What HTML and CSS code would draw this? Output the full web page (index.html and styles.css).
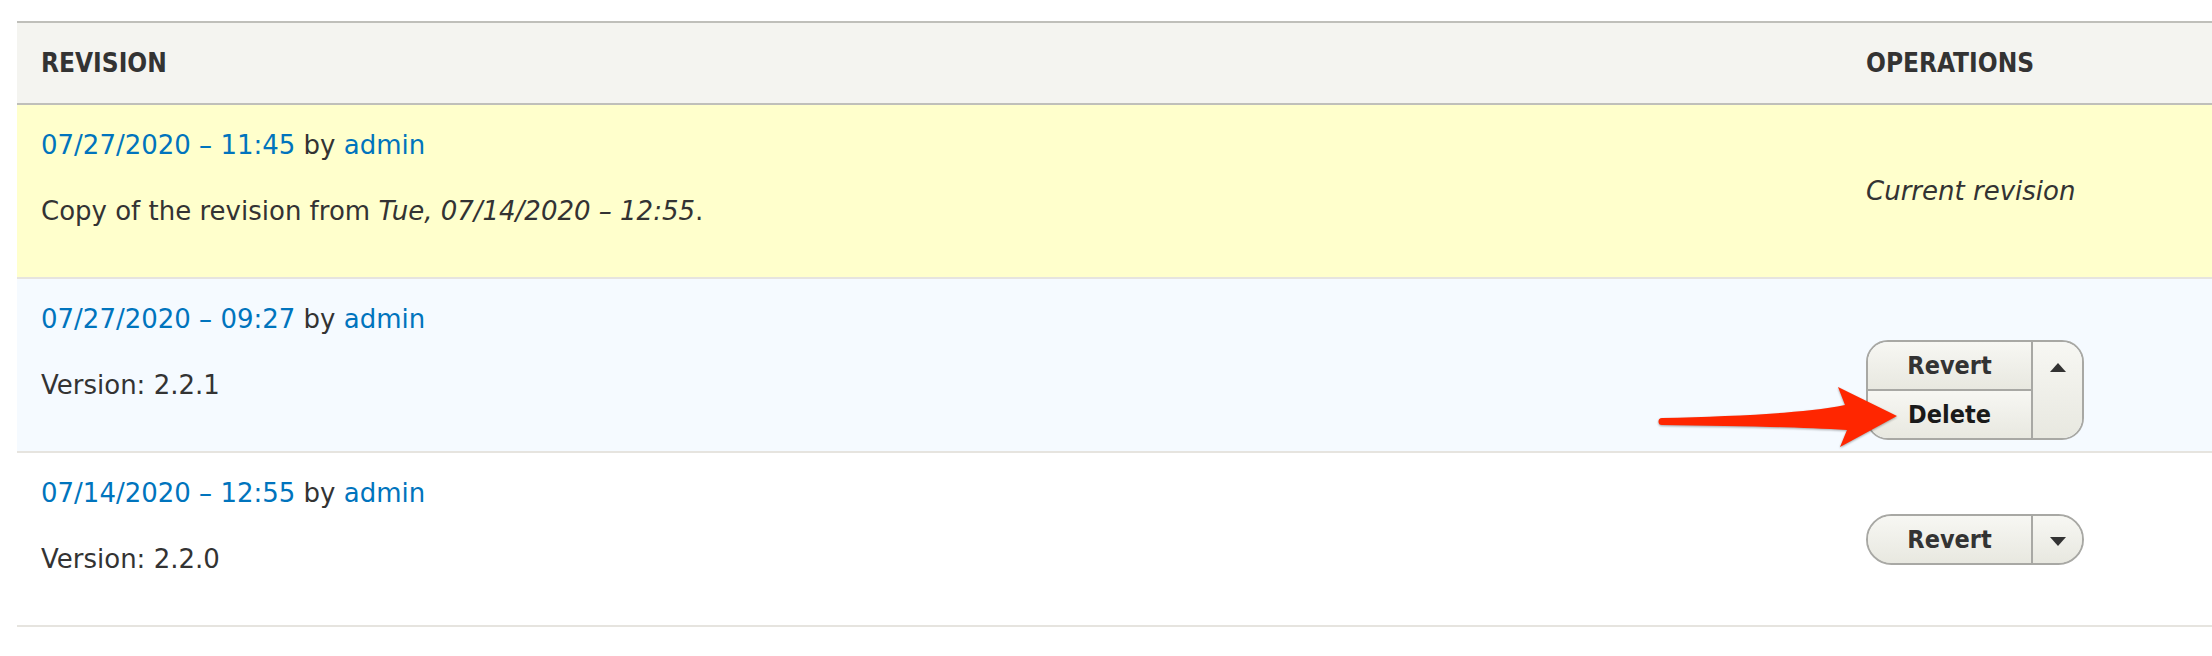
FILE: index.html
```html
<!DOCTYPE html>
<html lang="en">
<head>
<meta charset="utf-8">
<title>Revisions</title>
<link rel="stylesheet" href="styles.css">
</head>
<body>
<div class="page">
  <table class="revisions">
    <colgroup>
      <col class="col-rev">
      <col class="col-ops">
    </colgroup>
    <thead>
      <tr>
        <th>Revision</th>
        <th>Operations</th>
      </tr>
    </thead>
    <tbody>
      <tr class="current">
        <td class="rev">
          <a href="#">07/27/2020 – 11:45</a> by <a href="#">admin</a>
          <p class="log">Copy of the revision from <em>Tue, 07/14/2020 – 12:55</em>.</p>
        </td>
        <td class="ops"><em>Current revision</em></td>
      </tr>
      <tr class="hover">
        <td class="rev">
          <a href="#">07/27/2020 – 09:27</a> by <a href="#">admin</a>
          <p class="log">Version: 2.2.1</p>
        </td>
        <td class="ops">
          <div class="dropbutton">
            <div class="db-frame open">
              <div class="db-main">
                <div class="db-item">Revert</div>
                <div class="db-item second">Delete</div>
              </div>
              <div class="db-toggle"><span class="tri up"></span></div>
            </div>
          </div>
        </td>
      </tr>
      <tr>
        <td class="rev">
          <a href="#">07/14/2020 – 12:55</a> by <a href="#">admin</a>
          <p class="log">Version: 2.2.0</p>
        </td>
        <td class="ops">
          <div class="dropbutton">
            <div class="db-frame">
              <div class="db-main">
                <div class="db-item">Revert</div>
              </div>
              <div class="db-toggle"><span class="tri down"></span></div>
            </div>
          </div>
        </td>
      </tr>
    </tbody>
  </table>
  <svg class="annot-arrow" width="270" height="100" viewBox="0 0 270 100" aria-hidden="true">
    <path d="M22,48 C90,46 160,44 205,35 L198,17 L257,46 L200,77 L207,60 C160,57 90,56 22,55 A3.5,3.5 0 0 1 22,48 Z" fill="#ff2600"/>
  </svg>
</div>
</body>
</html>
```

FILE: styles.css
```css
html, body {
  margin: 0;
  padding: 0;
  background: #ffffff;
}

body {
  font-family: "DejaVu Sans", "Noto Sans", sans-serif;
  font-size: 26px;
  line-height: 40px;
  color: #333333;
}

.page {
  position: relative;
  padding: 21px 0 0 17px;
  height: 635px;
  overflow: hidden;
}

.revisions {
  border-collapse: collapse;
  table-layout: fixed;
  width: 2195px;
}

.col-rev { width: 1825px; }
.col-ops { width: 370px; }

.revisions th {
  background: #f4f4f0;
  border-top: 2px solid #bfbfba;
  border-bottom: 2px solid #bfbfba;
  padding: 20px 24px;
  text-align: left;
  text-transform: uppercase;
  font-family: "DejaVu Sans Condensed", "DejaVu Sans", sans-serif;
  font-stretch: condensed;
  font-weight: bold;
  color: #333333;
  height: 40px;
}

.revisions td {
  border-bottom: 2px solid #e6e4df;
  padding: 20px 24px;
  vertical-align: middle;
}

.revisions td.rev {
  vertical-align: top;
}

tr.current td { background: #ffffcc; }
tr.hover td { background: #f5faff; }

a {
  color: #0074bd;
  text-decoration: none;
}

.log {
  margin: 26px 0;
}

.ops em {
  font-style: italic;
}

.dropbutton {
  position: relative;
  width: 218px;
  height: 51px;
}

.db-frame {
  position: absolute;
  top: 0;
  left: 0;
  width: 218px;
  box-sizing: border-box;
  display: flex;
  border: 2px solid #a8a8a4;
  border-radius: 26px;
  background: linear-gradient(to bottom, #f7f7f3 0%, #e8e8e0 100%);
  overflow: hidden;
  font-family: "DejaVu Sans Condensed", "DejaVu Sans", sans-serif;
  font-stretch: condensed;
  font-weight: bold;
  font-size: 25px;
  color: #333333;
}

.db-frame.open {
  border-radius: 22px;
  background: none;
}

.db-main {
  flex: 0 0 163px;
  display: flex;
  flex-direction: column;
}

.db-item {
  height: 47px;
  display: flex;
  align-items: center;
  justify-content: center;
  padding-top: 1px;
  box-sizing: border-box;
  background: linear-gradient(to bottom, #f7f7f3 0%, #e8e8e0 100%);
}

.db-item.second {
  height: 49px;
  border-top: 2px solid #a8a8a4;
  color: #1a1a1a;
}

.db-toggle {
  flex: 1 1 auto;
  border-left: 2px solid #a8a8a4;
  display: flex;
  justify-content: center;
  align-items: flex-start;
  padding-top: 21px;
  box-sizing: border-box;
  background: linear-gradient(to bottom, #f7f7f3 0%, #e8e8e0 100%);
}

.tri {
  width: 0;
  height: 0;
  border-left: 8px solid transparent;
  border-right: 8px solid transparent;
}

.tri.up {
  border-bottom: 9px solid #333333;
}

.tri.down {
  border-top: 9px solid #333333;
}

.annot-arrow {
  position: absolute;
  left: 1640px;
  top: 370px;
  filter: drop-shadow(0 1px 1px rgba(0, 0, 0, 0.35));
}
```
